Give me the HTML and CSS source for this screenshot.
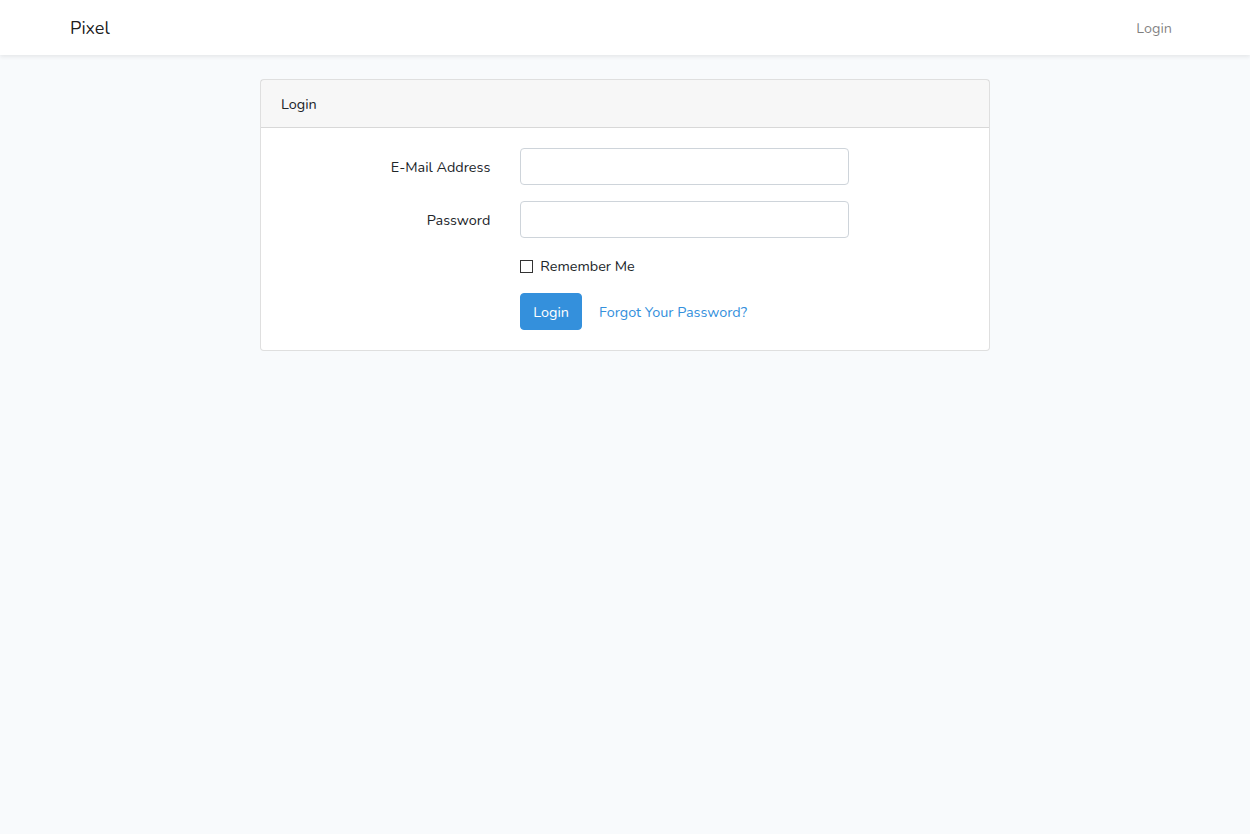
FILE: index.html
```html
<!DOCTYPE html>
<html lang="en">
<head>
<meta charset="utf-8">
<title>Pixel</title>
<link rel="stylesheet" href="styles.css">
</head>
<body>
<nav class="navbar">
  <div class="container nav-inner">
    <a class="brand" href="#">Pixel</a>
    <a class="nav-link" href="#">Login</a>
  </div>
</nav>
<main class="main">
  <div class="container">
    <div class="card">
      <div class="card-header">Login</div>
      <div class="card-body">
        <form class="form">
          <div class="form-row">
            <label class="col-label" for="email">E-Mail Address</label>
            <div class="col-field"><input id="email" class="form-control" type="email"></div>
          </div>
          <div class="form-row">
            <label class="col-label" for="password">Password</label>
            <div class="col-field"><input id="password" class="form-control" type="password"></div>
          </div>
          <div class="form-row">
            <div class="col-label"></div>
            <div class="col-field">
              <label class="form-check"><input type="checkbox" class="check"> <span class="check-text">Remember Me</span></label>
            </div>
          </div>
          <div class="form-row last">
            <div class="col-label"></div>
            <div class="col-field actions">
              <button type="button" class="btn">Login</button>
              <a class="btn-link" href="#">Forgot Your Password?</a>
            </div>
          </div>
        </form>
      </div>
    </div>
  </div>
</main>
</body>
</html>
```
FILE: styles.css
```css
* { box-sizing: border-box; }
html, body { margin: 0; }
body {
  background: #f8fafc;
  font-family: "Nunito", "Noto Sans", "Open Sans", sans-serif;
  font-size: 14.4px;
  line-height: 1.6;
  color: #212529;
}
a { text-decoration: none; }
.container {
  width: 1140px;
  margin: 0 auto;
  padding: 0 15px;
}
.navbar {
  background: #fff;
  box-shadow: 0 2px 4px rgba(0,0,0,.075);
  padding: 8px 0;
}
.nav-inner {
  display: flex;
  align-items: center;
  justify-content: space-between;
}
.brand {
  font-size: 18px;
  line-height: 28.8px;
  padding: 6px 0 4px;
  color: rgba(0,0,0,.9);
}
.nav-link {
  color: rgba(0,0,0,.5);
  padding: 9px 8px 7px;
}
.main { padding: 24px 0; }
.card {
  width: 730px;
  margin: 0 auto;
  background: #fff;
  border: 1px solid rgba(0,0,0,.125);
  border-radius: 4px;
}
.card-header {
  padding: 13px 20px 11px;
  background: rgba(0,0,0,.03);
  border-bottom: 1px solid rgba(0,0,0,.125);
}
.card-body { padding: 20px; }
.form-row {
  display: flex;
  margin: 0 -15px 16px;
}
.form-row.last { margin-bottom: 0; }
.col-label {
  width: 239.33px;
  padding: 8px 15px 6px;
  text-align: right;
}
.col-field {
  width: 359px;
  padding: 0 15px;
}
.form-control {
  display: block;
  width: 100%;
  height: 37px;
  padding: 6px 12px;
  font: inherit;
  border: 1px solid #ced4da;
  border-radius: 4px;
  background: #fff;
}
.form-check {
  display: flex;
  align-items: center;
  gap: 7px;
  height: 23px;
}
.check {
  -webkit-appearance: none;
  appearance: none;
  width: 13px;
  height: 13px;
  margin: 1px 0 0;
  border: 1px solid #333;
  background: #fff;
  border-radius: 0;
}
.check-text { padding-top: 2px; }
.actions {
  display: flex;
  align-items: center;
}
.btn {
  font: inherit;
  color: #fff;
  background: #3490dc;
  border: 1px solid #3490dc;
  border-radius: 4px;
  padding: 7px 12px 5px;
  line-height: 23px;
}
.btn-link {
  color: #3490dc;
  padding: 7px 12px 5px;
  margin-left: 5px;
}
```
